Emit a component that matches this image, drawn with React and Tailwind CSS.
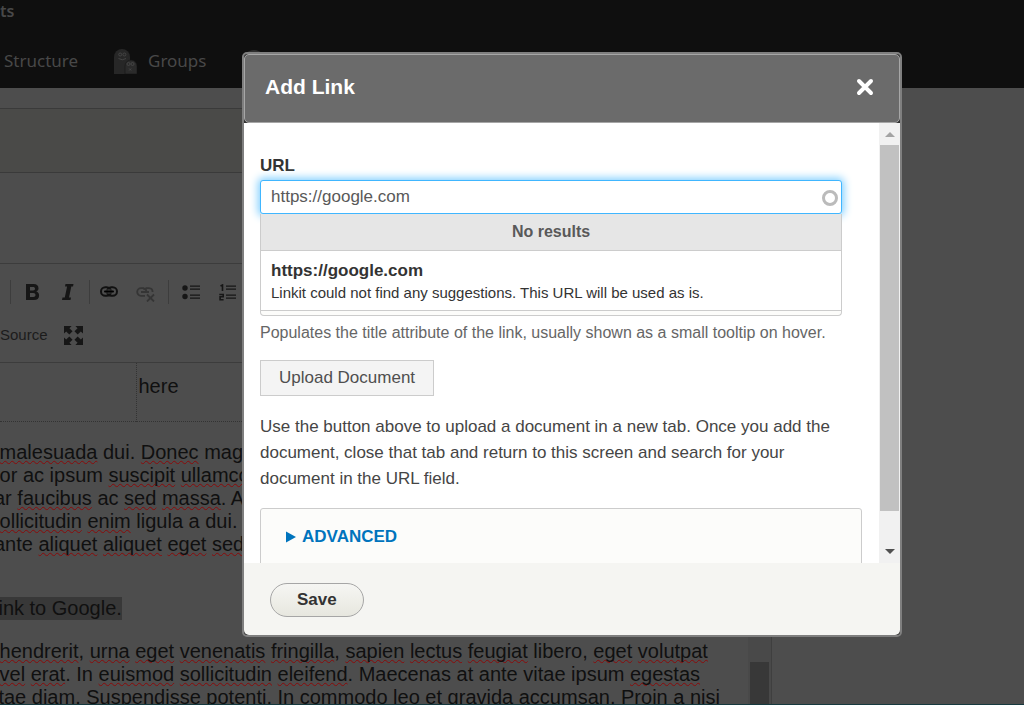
import React from "react";

const S = ({ children }) => (
  <span className="underline decoration-wavy decoration-1 decoration-[#8a0a0a] underline-offset-1 [text-decoration-skip-ink:none]">
    {children}
  </span>
);

const Sep = () => <span className="h-6 w-px shrink-0 bg-[#3d3d3d]" />;

function TopBar() {
  return (
    <header className="flex h-[88px] shrink-0 flex-col overflow-hidden bg-[#0f0f0f] font-['Noto_Sans','Open_Sans',sans-serif] text-[#484848]">
      <div className="h-[35px] text-base leading-[22px] font-semibold">ts</div>
      <nav className="flex h-[53px] items-center text-[17px] leading-6">
        <a href="#structure" className="ml-1 w-[110px] pb-px">Structure</a>
        <a href="#groups" className="flex items-center gap-[11px] pb-px">
          <svg className="h-[25px] w-[23px]" viewBox="0 0 23 25" aria-hidden="true">
            <path d="M0 25V8a8 8 0 0 1 16 0v17z" fill="#272727" />
            <path d="M11 25v-8a6 6 0 0 1 12 0v8z" fill="#2b2b2b" stroke="#161616" strokeWidth=".6" />
            <g fill="none" stroke="#4a4a4a" strokeWidth=".8">
              <circle cx="6.200" cy="5.500" r="1.500" />
              <circle cx="10.400" cy="5.500" r="1.500" />
              <path d="M4.500 9.500q4 2.500 7.500 0" />
              <circle cx="14.500" cy="15" r="1.500" />
              <circle cx="18.500" cy="15" r="1.500" />
              <path d="M15.200 19.500l2 2m0-2l-2 2" />
            </g>
          </svg>
          Groups
        </a>
        <svg className="ml-9 h-6 w-6" viewBox="0 0 24 24" aria-hidden="true">
          <circle cx="12" cy="12" r="12" fill="#2e2e2e" />
        </svg>
      </nav>
    </header>
  );
}

function Toolbar() {
  return (
    <div className="flex h-[99px] shrink-0 flex-col border-b border-[#3c3c3c] pt-4 text-[#161616]">
      <div className="flex h-6 items-center">
        <span className="w-[10px]" />
        <Sep />
        <button aria-label="Bold" className="ml-[15px] flex w-[36px]">
          <svg className="h-4 w-[14px]" viewBox="0 0 14 16"><path fill="currentColor" fillRule="evenodd" d="M0 0h7.500c3.500 0 5 1.700 5 4.200 0 1.700-.9 2.800-2.300 3.300 1.900.5 2.900 1.900 2.900 3.900 0 2.900-1.900 4.600-5.300 4.600H0zM4 3v3.500h3c1.300 0 2-.6 2-1.700C9 3.600 8.300 3 7 3zm0 6v4h3.300c1.400 0 2.200-.7 2.200-2S8.700 9 7.300 9z" /></svg>
        </button>
        <button aria-label="Italic" className="flex w-[27px]">
          <svg className="h-4 w-[14px]" viewBox="0 0 14 16"><path fill="currentColor" d="M3.500 0h8l-.5 2.500H9.300L7 13.500h2L8.500 16H0l.5-2.500h2.300L5.100 2.500H3z" /></svg>
        </button>
        <Sep />
        <button aria-label="Link" className="ml-[10px] flex w-9">
          <svg className="-mt-0.5 h-[11px] w-[18px]" viewBox="0 0 18 11" fill="none">
            <rect x="1" y="1.200" width="10" height="8.600" rx="4.300" stroke="#111" strokeWidth="2" />
            <rect x="7" y="1.200" width="10" height="8.600" rx="4.300" stroke="#111" strokeWidth="2" />
            <path d="M7 3.500v4M11 3.500v4" stroke="#4d4d4d" strokeWidth="1.200" />
            <path d="M5 5.500h8" stroke="#000" strokeWidth="2" strokeLinecap="round" />
          </svg>
        </button>
        <button aria-label="Unlink" className="flex w-8">
          <svg className="mt-1 h-[15px] w-[19px]" viewBox="0 0 19 15" fill="none" stroke="#353535" strokeWidth="1.800"><path d="M8 1.200H5a3.800 3.800 0 0 0 0 7.600h4M9.500 1.200H13a3.800 3.800 0 0 1 3.600 3.800M7 1.500q3 0 3.300 2.500M5 5h8" /><path d="M11 7.500l7 7m0-7l-7 7" /></svg>
        </button>
        <Sep />
        <button aria-label="Bulleted list" className="ml-[13px] flex w-[37px]">
          <svg className="h-4 w-[18px]" viewBox="0 0 18 16" fill="currentColor"><circle cx="3" cy="4" r="2.700" /><circle cx="3" cy="12.500" r="2.700" /><path d="M8 1.500h10v1.300H8zM8 4.500h10v1.300H8zM8 10.500h10v1.300H8zM8 13.500h10v1.300H8z" /></svg>
        </button>
        <button aria-label="Numbered list" className="flex">
          <svg className="h-[17px] w-[17px]" viewBox="0 0 17 17"><path fill="none" stroke="currentColor" strokeWidth="1.600" d="M1.500 2l2-1v6M.3 10.500h3.900v2.300H1.100v2.900h3.500" /><path fill="currentColor" d="M7 1.500h10v1.300H7zM7 4.500h10v1.300H7zM7 10.500h10v1.300H7zM7 13.500h10v1.300H7z" /></svg>
        </button>
      </div>
      <div className="mt-[15px] flex h-8 items-center gap-4 text-[15px]">
        <button className="text-[#1c1c1c]">Source</button>
        <button aria-label="Maximize">
          <svg className="h-[19px] w-[19px]" viewBox="0 0 20 20" fill="currentColor"><path d="M0 0h8L5.700 2.300 9 5.600 5.600 9 2.300 5.700 0 8zM20 0v8l-2.300-2.300L14.400 9 11 5.600l3.300-3.300L12 0zM0 20v-8l2.300 2.300L5.600 11 9 14.400l-3.300 3.300L8 20zM20 20h-8l2.300-2.300-3.300-3.300 3.400-3.400 3.300 3.300L20 12z" /></svg>
        </button>
      </div>
    </div>
  );
}

function Page() {
  return (
    <div className="flex h-screen flex-col overflow-hidden border-b border-[#173a3f] bg-[#4d4d4d]">
      <TopBar />
      <div className="mt-5 mr-[252px] flex min-h-0 flex-1 flex-col text-[#101010]">
        <div className="h-[65px] shrink-0 border-y border-[#3a3a3a] bg-[#4a4a48]" />
        <div className="h-[91px] shrink-0 border-b border-[#3c3c3c]" />
        <Toolbar />
        <div className="flex min-h-0 flex-1">
          <div className="min-w-0 flex-1 overflow-hidden text-xl leading-[23px] whitespace-nowrap">
            <table className="w-full border-collapse">
              <tbody>
                <tr className="h-[58px] border-b border-dotted border-[#333]">
                  <td className="w-[136px] border-r border-dotted border-[#333]" />
                  <td className="pt-3 pl-0.5 align-top">here</td>
                </tr>
              </tbody>
            </table>
            <div className="-ml-1.5">
              <p className="mt-[19px]">
                &nbsp;<S>malesuada</S> dui. <S>Donec</S> magna<br />
                tor ac ipsum <S>suscipit</S> <S>ullamcorper</S><br />
                ar <S>faucibus</S> ac <S>sed</S> <S>massa</S>. Ac<br />
                &nbsp;<S>ollicitudin</S> <S>enim</S> ligula a dui. <S>In</S><br />
                ante <S>aliquet</S> <S>aliquet</S> <S>eget</S> <S>sed</S>
              </p>
              <p className="mt-[41px]"><span className="inline-block bg-[#383838]">link to Google.</span></p>
              <p className="mt-5">
                &nbsp;<S>hendrerit</S>, <S>urna</S> <S>eget</S> <S>venenatis</S> <S>fringilla</S>, <S>sapien</S> <S>lectus</S> <S>feugiat</S> libero, <S>eget</S> <S>volutpat</S><br />
                &nbsp;<S>vel</S> <S>erat</S>. In <S>euismod</S> <S>sollicitudin</S> <S>eleifend</S>. Maecenas at ante vitae ipsum <S>egestas</S><br />
                itae diam. Suspendisse potenti. In commodo leo et gravida accumsan. Proin a nisi
              </p>
            </div>
          </div>
          <div className="flex w-6 flex-col border-r border-[#3f3f3f] bg-[#494949] px-0.5">
            <div className="mt-auto h-[42px] bg-[#383838]" />
          </div>
        </div>
      </div>
    </div>
  );
}

function ScrollRail() {
  return (
    <div className="flex w-[21px] shrink-0 flex-col items-center bg-[#f1f1f1]" aria-hidden="true">
      <svg className="h-[22px] w-[10px]" viewBox="0 0 10 22"><path d="M0 14h10l-5-5z" fill="#a3a3a3" /></svg>
      <div className="w-[19px] flex-1 bg-[#c1c1c1]" />
      <svg className="h-[52px] w-[10px]" viewBox="0 0 10 52"><path d="M0 38h10l-5 5z" fill="#505050" /></svg>
    </div>
  );
}

function LinkDialog() {
  return (
    <div role="dialog" aria-labelledby="dialog-title" className="absolute inset-x-0 top-[52px] mr-[122px] ml-[242px] overflow-hidden rounded-[5px] border-2 border-[#7f7f7f] bg-[#333]">
      <div className="flex h-[69px] items-center justify-between rounded-[5px] border border-[#a6a6a6] bg-[#6b6b6b] pr-[25px] pb-1 pl-5 text-white">
        <h1 id="dialog-title" className="text-[21px] font-bold">Add Link</h1>
        <button aria-label="Close">
          <svg className="h-[18px] w-[18px]" viewBox="0 0 18 18"><path d="M3 3l12 12M15 3L3 15" stroke="white" strokeWidth="4" strokeLinecap="round" /></svg>
        </button>
      </div>
      <div className="flex h-[440px] overflow-hidden bg-white">
        <div className="min-w-0 flex-1 pt-[31px] pr-[17px] pl-4 text-[17px]">
          <div className="mr-5">
            <label htmlFor="url" className="block h-[26px] leading-6 font-bold text-[#333]">URL</label>
            <div className="relative">
              <input id="url" type="text" defaultValue="https://google.com" className="block h-[34px] w-full rounded-[3px] border border-[#40b6ff] bg-white px-[10px] text-[#595959] shadow-[0_0_8px_2px_#80cfff] outline-none" />
              <span className="absolute top-[10px] right-1 h-4 w-4 rounded-full border-3 border-[#bbb]" />
            </div>
            <div className="relative rounded-b-sm border border-t-0 border-[#ccc] bg-[#fcfcfa] pb-1">
              <div className="h-[37px] border-b border-[#ccc] bg-[#e6e6e6] text-center text-base leading-9 font-bold text-[#595959]">No results</div>
              <div className="h-[60px] border-b border-[#ccc] bg-white px-[10px] pt-2 text-[#333]">
                <div className="leading-6 font-bold">https://google.com</div>
                <div className="text-[15px] leading-5">Linkit could not find any suggestions. This URL will be used as is.</div>
              </div>
            </div>
          </div>
          <p className="mt-[5px] text-base leading-6 whitespace-nowrap text-[#666]">Populates the title attribute of the link, usually shown as a small tooltip on hover.</p>
          <button className="mt-[15px] block h-9 border border-[#ccc] bg-[#f4f4f4] px-[18px] text-[#4f4f4f]">Upload Document</button>
          <p className="mt-[18px] leading-[26px] text-[#454545]">
            Use the button above to upload a document in a new tab. Once you add the document, close that tab and return to this screen and search for your document in the URL field.
          </p>
          <section className="mt-4 h-20 rounded-[3px] border border-[#ccc] bg-[#fcfcfa] px-[25px] pt-4">
            <button className="flex items-center gap-[6px] leading-6 font-bold text-[#0074bd]">
              <svg className="h-3 w-[10px]" viewBox="0 0 10 12"><path d="M0 .5v11L10 6z" fill="currentColor" /></svg>
              ADVANCED
            </button>
          </section>
        </div>
        <ScrollRail />
      </div>
      <div className="rounded-b-[5px] bg-[#f5f5f2] px-[26px] pt-5 pb-[18px]">
        <button className="block h-[34px] rounded-full border border-[#a6a6a6] bg-linear-to-b from-[#f6f6f3] to-[#e7e7df] px-[26px] pb-px text-[17px] font-bold text-[#333]">Save</button>
      </div>
    </div>
  );
}

export default function App() {
  return (
    <main className="relative h-screen overflow-hidden font-['Liberation_Sans',Arial,sans-serif]">
      <Page />
      <LinkDialog />
    </main>
  );
}
